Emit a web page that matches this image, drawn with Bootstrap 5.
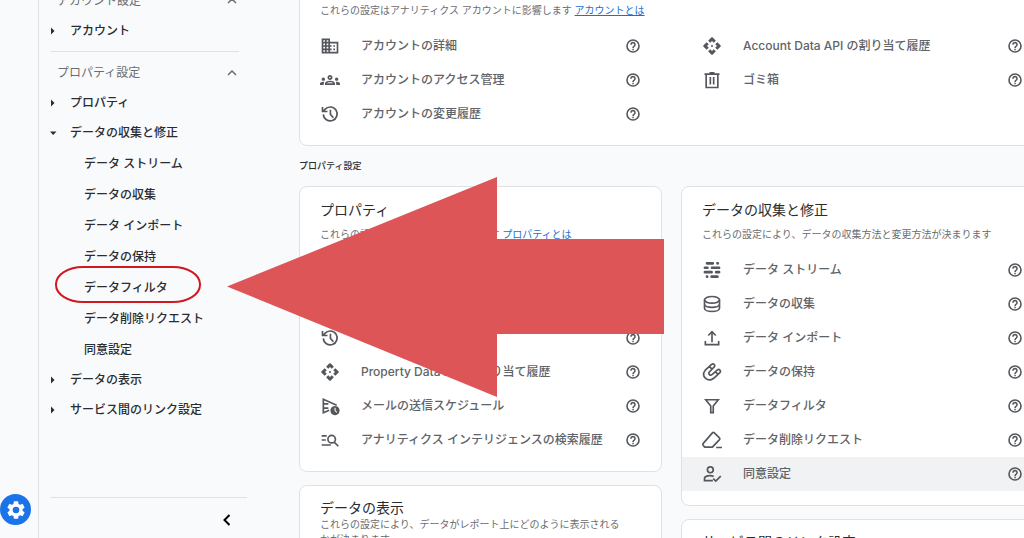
<!DOCTYPE html>
<html lang="ja">
<head>
<meta charset="utf-8">
<meta name="viewport" content="width=device-width, initial-scale=1">
<title>管理 - アナリティクス</title>
<link href="https://cdn.jsdelivr.net/npm/bootstrap@5.3.0/dist/css/bootstrap.min.css" rel="stylesheet">
<style>
:root { --ink:#2a2c2f; --muted-ink:#606367; --line:#dfe1e4; --page:#f9fafc; }
body { font-family:Inter,"Noto Sans CJK JP",sans-serif; font-size:12px; line-height:16px; color:var(--ink); background:var(--page); }
a { color:inherit; text-decoration:none; }
svg { display:block; fill:currentColor; flex-shrink:0; }
.line-icon { fill:none; stroke:currentColor; stroke-width:2; }
.plain-btn { border:0; padding:0; background:none; color:inherit; }

.rail { width:39px; border-right:1px solid var(--line); padding-bottom:13px; }
.gear-btn { width:31px; height:31px; background:#1a73e8; color:#fff; }

.side { width:260px; padding:0 52px 0 11px; }
.side-scroll { margin-top:-15px; font-weight:500; }
.side-head { height:31px; width:100%; padding:0 9px 0 7px; color:#6a6d71; font-weight:400; }
.side-rule { height:1px; background:var(--line); margin:5px 8px 5px 0; }
.tree-item { height:30px; width:100%; gap:12px; font-weight:500; }
.sub-item { height:31px; padding-left:34px; }
.ring { position:absolute; left:5px; top:-6px; width:146px; height:37px; border:2px solid #cf1820; border-radius:28px/18px; pointer-events:none; }
.side-foot { height:41px; border-top:1px solid var(--line); padding:4px 14px 0 0; }

.board { width:calc(100% + 20px); margin-top:-38px; }
.two-col { display:grid; grid-template-columns:1fr 1fr; gap:19px; }
.in-card { gap:21px; }
.stack { display:flex; flex-direction:column; gap:13px; }
.panel { background:#fff; border:1px solid var(--line); border-radius:8px; padding:14px 0; }
.panel h2 { font-size:14px; line-height:18px; font-weight:400; margin:0 20px 7px; }
.panel p { font-size:10px; line-height:16px; color:#6a6d71; margin:0 20px 11px; }
.panel.tight { padding-top:13px; }
.panel.tight h2 { margin-bottom:0; }
.panel.tight p { line-height:15px; }
.panel p a { color:#1a6fd0; text-decoration:underline; }
.section-label { height:40px; font-size:9px; font-weight:500; margin:0; }
.setting { height:34px; padding:0 20px; color:var(--muted-ink); font-weight:500; }
.setting a { gap:21px; }
.setting svg { color:#54575b; }
.setting.current { background:#f1f2f4; }
.arrow { position:absolute; left:227px; top:177px; pointer-events:none; }
</style>
</head>
<body class="overflow-hidden">
<svg width="0" height="0" class="position-absolute" aria-hidden="true">
  <symbol id="i-help" viewBox="0 0 24 24"><circle cx="12" cy="12" r="9" fill="none" stroke="currentColor" stroke-width="2.400"/><path d="M11 16h2.200v2.200H11zM12 5.800c-2.300 0-4.200 1.800-4.200 4.200h2.300c0-1.100.900-1.900 1.900-1.900s1.900.8 1.900 1.900c0 2-3 1.750-3 5h2.300c0-2.250 3-2.500 3-5 0-2.400-1.900-4.200-4.200-4.200z"/></symbol>
  <symbol id="i-domain" viewBox="0 0 24 24"><path d="M12 7V3H2v18h20V7H12zM6 19H4v-2h2v2zm0-4H4v-2h2v2zm0-4H4V9h2v2zm0-4H4V5h2v2zm4 12H8v-2h2v2zm0-4H8v-2h2v2zm0-4H8V9h2v2zm0-4H8V5h2v2zm10 12h-8v-2h2v-2h-2v-2h2v-2h-2V9h8v10zm-2-8h-2v2h2v-2zm0 4h-2v2h2v-2z"/></symbol>
  <symbol id="i-groups" viewBox="0 0 24 24"><path d="M4 13c1.100 0 2-.9 2-2s-.9-2-2-2-2 .9-2 2 .9 2 2 2zm1.130 1.100C4.760 14.040 4.390 14 4 14c-.99 0-1.930.210-2.780.580C.480 14.900 0 15.620 0 16.430V18h4.500v-1.610c0-.830.230-1.610.630-2.290zM20 13c1.100 0 2-.9 2-2s-.9-2-2-2-2 .9-2 2 .9 2 2 2zm4 3.430c0-.810-.480-1.530-1.220-1.850-.850-.370-1.790-.580-2.780-.580-.390 0-.760.040-1.130.100.400.680.630 1.460.630 2.290V18H24v-1.570zM16.240 13.650c-1.170-.520-2.610-.900-4.240-.900s-3.070.390-4.240.900C6.680 14.130 6 15.210 6 16.390V18h12v-1.610c0-1.180-.680-2.260-1.760-2.740zM8.070 16c.090-.230.130-.390.910-.690.970-.380 1.990-.560 3.020-.560s2.050.180 3.020.560c.770.300.810.460.910.690H8.070zM12 8c.550 0 1 .450 1 1s-.450 1-1 1-1-.450-1-1 .450-1 1-1m0-2c-1.660 0-3 1.340-3 3s1.340 3 3 3 3-1.340 3-3-1.340-3-3-3z"/></symbol>
  <symbol id="i-history" viewBox="0 0 24 24"><g class="line-icon"><path d="M4 12.500a8.300 8.300 0 1 0 2-6L3.500 9M3 3.500V9h6M12.500 7v5.500l3.500 4"/></g></symbol>
  <symbol id="i-api" viewBox="0 0 24 24"><path d="M13.500 12L12 13.500 10.500 12l1.500-1.500zM12 6l2.120 2.120 2.500-2.500L13 1.800q-1-.8-2 0L7.380 5.620l2.500 2.500zM6 12l2.120-2.120-2.500-2.500L1.800 11q-.8 1 0 2l3.820 3.620 2.500-2.500zM18 12l-2.120 2.120 2.500 2.500L22.200 13q.8-1 0-2l-3.820-3.620-2.500 2.500zM12 18l-2.120-2.120-2.500 2.500L11 22.200q1 .8 2 0l3.620-3.820-2.500-2.500z"/></symbol>
  <symbol id="i-trash" viewBox="0 0 24 24"><g class="line-icon"><path d="M3 5h18M5 5v16h14V5M9 3.500h6M10 8.500v9M14 8.500v9"/></g></symbol>
  <symbol id="i-send" viewBox="0 0 24 24"><g class="line-icon"><path d="M11 17l-7 3V4l16 7M4 9.500h6M4 14.500h6"/></g><path fill-rule="evenodd" d="M18 12a5.500 5.500 0 1 0 .01 0zM17.400 14h1.300v3.300l2 2-.9.9-2.400-2.400z"/></symbol>
  <symbol id="i-search" viewBox="0 0 24 24"><g class="line-icon"><path d="M2 7h6M2 12h5M2 18h11M17 14.500l5 5"/><circle cx="14" cy="11" r="4.500"/></g></symbol>
  <symbol id="i-stream" viewBox="0 0 24 24"><g fill="none" stroke="currentColor" stroke-width="3.200" stroke-linecap="round"><path d="M6 4h7M18.500 4h.5M3.500 9.300h3M12 9.300h8.500M3.500 14.600h8M17 14.600h3.500M6 20h.2M11.500 20h7"/></g></symbol>
  <symbol id="i-db" viewBox="0 0 24 24"><g class="line-icon"><ellipse cx="12" cy="7" rx="9" ry="4"/><path d="M3 7v10c0 2.300 4 4 9 4s9-1.700 9-4V7M3 12c0 2.300 4 4 9 4s9-1.700 9-4"/></g></symbol>
  <symbol id="i-upload" viewBox="0 0 24 24"><g class="line-icon"><path d="M12 17V5M7.500 9L12 4.500 16.500 9M4 15.500V20h16v-4.500"/></g></symbol>
  <symbol id="i-clip" viewBox="0 0 24 24"><g class="line-icon"><path d="M11.500 2.800a2.200 2.200 0 0 1 3.200 3L8.800 12c-2 2.100 1.200 5 3.200 3l6.500-5.500a2.200 2.200 0 0 1 3 3.200L14 19.500C7 25-2 17 4 9.800zM9 5.500l3 3M16 11.500l3 3"/></g></symbol>
  <symbol id="i-filter" viewBox="0 0 24 24"><g class="line-icon"><path d="M4.500 4.500h15L13.500 12v8h-3v-8z"/></g></symbol>
  <symbol id="i-eraser" viewBox="0 0 24 24"><g class="line-icon" stroke-linejoin="round"><path d="M14.500 3.200L21 9.500q.8 1 0 2L12.500 20.500H3L1.200 18q-.5-1 .3-2L12.500 3.400q1-1 2-.2zM17 21h7"/></g></symbol>
  <symbol id="i-consent" viewBox="0 0 24 24"><g class="line-icon"><circle cx="10" cy="7" r="3.500"/><path d="M13 20H3v-2.500C3 14 10 13 14 15M13.500 17.500l3 3 6-6"/></g></symbol>
  <symbol id="i-up" viewBox="0 0 12 12"><path d="M2 8l4-4 4 4" fill="none" stroke="currentColor" stroke-width="1.500"/></symbol>
  <symbol id="i-right" viewBox="0 0 8 8"><path d="M1 .5L4.500 4 1 7.500z"/></symbol>
  <symbol id="i-down" viewBox="0 0 8 8"><path d="M0 2.500h6.500L3.200 6z"/></symbol>
</svg>

<div class="d-flex vh-100 overflow-hidden position-relative">
  <div class="rail d-flex align-items-end flex-shrink-0">
    <button class="gear-btn plain-btn rounded-circle d-flex align-items-center justify-content-center flex-shrink-0" aria-label="管理">
      <svg width="22" height="22" viewBox="0 0 24 24"><path d="M19.140 12.940c.040-.300.060-.610.060-.940s-.020-.640-.070-.940l2.030-1.580a.49.49 0 0 0 .120-.610l-1.920-3.320a.49.49 0 0 0-.590-.220l-2.390.960a7 7 0 0 0-1.620-.940l-.360-2.540a.48.48 0 0 0-.480-.410h-3.840a.48.48 0 0 0-.470.410l-.360 2.540a7 7 0 0 0-1.620.940l-2.390-.960a.48.48 0 0 0-.590.220L2.740 8.870a.48.48 0 0 0 .120.610l2.030 1.580a6 6 0 0 0 0 1.880l-2.030 1.580a.49.49 0 0 0-.120.610l1.920 3.320c.120.220.370.290.590.220l2.390-.960q.750.590 1.620.940l.360 2.540c.050.240.240.410.480.410h3.840c.240 0 .440-.170.470-.410l.360-2.540a7 7 0 0 0 1.620-.940l2.390.960c.220.080.470 0 .590-.220l1.920-3.320a.48.48 0 0 0-.120-.610zM12 15.600a3.600 3.600 0 1 1 0-7.200 3.600 3.600 0 0 1 0 7.200z"/></svg>
    </button>
  </div>

  <nav class="side d-flex flex-column flex-shrink-0" aria-label="設定">
    <div class="side-scroll flex-grow-1">
      <button class="side-head plain-btn d-flex align-items-center justify-content-between">アカウント設定<svg width="12" height="12"><use href="#i-up"/></svg></button>
      <button class="tree-item plain-btn d-flex align-items-center"><svg width="8" height="8"><use href="#i-right"/></svg>アカウント</button>
      <div class="side-rule"></div>
      <button class="side-head plain-btn d-flex align-items-center justify-content-between">プロパティ設定<svg width="12" height="12"><use href="#i-up"/></svg></button>
      <button class="tree-item plain-btn d-flex align-items-center"><svg width="8" height="8"><use href="#i-right"/></svg>プロパティ</button>
      <button class="tree-item plain-btn d-flex align-items-center"><svg width="8" height="8"><use href="#i-down"/></svg>データの収集と修正</button>
      <ul class="list-unstyled mb-0">
        <li class="sub-item d-flex align-items-center"><a href="#">データ ストリーム</a></li>
        <li class="sub-item d-flex align-items-center"><a href="#">データの収集</a></li>
        <li class="sub-item d-flex align-items-center"><a href="#">データ インポート</a></li>
        <li class="sub-item d-flex align-items-center"><a href="#">データの保持</a></li>
        <li class="sub-item d-flex align-items-center position-relative"><a href="#">データフィルタ</a><span class="ring"></span></li>
        <li class="sub-item d-flex align-items-center"><a href="#">データ削除リクエスト</a></li>
        <li class="sub-item d-flex align-items-center"><a href="#">同意設定</a></li>
      </ul>
      <button class="tree-item plain-btn d-flex align-items-center"><svg width="8" height="8"><use href="#i-right"/></svg>データの表示</button>
      <button class="tree-item plain-btn d-flex align-items-center"><svg width="8" height="8"><use href="#i-right"/></svg>サービス間のリンク設定</button>
    </div>
    <div class="side-foot d-flex align-items-center justify-content-end">
      <button class="plain-btn" aria-label="閉じる"><svg width="12" height="12" viewBox="0 0 12 12"><path d="M8.500 1L3.500 6l5 5" fill="none" stroke="#000" stroke-width="2"/></svg></button>
    </div>
  </nav>

  <main class="flex-grow-1">
    <div class="board">
      <section class="panel">
        <h2>アカウント</h2>
        <p>これらの設定はアナリティクス アカウントに影響します <a href="#">アカウントとは</a></p>
        <div class="two-col in-card">
          <ul class="list-unstyled mb-0">
            <li class="setting d-flex align-items-center justify-content-between"><a href="#" class="d-flex align-items-center"><svg width="20" height="20"><use href="#i-domain"/></svg>アカウントの詳細</a><button class="plain-btn" aria-label="ヘルプ"><svg width="16" height="16"><use href="#i-help"/></svg></button></li>
            <li class="setting d-flex align-items-center justify-content-between"><a href="#" class="d-flex align-items-center"><svg width="20" height="20"><use href="#i-groups"/></svg>アカウントのアクセス管理</a><button class="plain-btn" aria-label="ヘルプ"><svg width="16" height="16"><use href="#i-help"/></svg></button></li>
            <li class="setting d-flex align-items-center justify-content-between"><a href="#" class="d-flex align-items-center"><svg width="20" height="20"><use href="#i-history"/></svg>アカウントの変更履歴</a><button class="plain-btn" aria-label="ヘルプ"><svg width="16" height="16"><use href="#i-help"/></svg></button></li>
          </ul>
          <ul class="list-unstyled mb-0">
            <li class="setting d-flex align-items-center justify-content-between"><a href="#" class="d-flex align-items-center"><svg width="20" height="20"><use href="#i-api"/></svg>Account Data API の割り当て履歴</a><button class="plain-btn" aria-label="ヘルプ"><svg width="16" height="16"><use href="#i-help"/></svg></button></li>
            <li class="setting d-flex align-items-center justify-content-between"><a href="#" class="d-flex align-items-center"><svg width="20" height="20"><use href="#i-trash"/></svg>ゴミ箱</a><button class="plain-btn" aria-label="ヘルプ"><svg width="16" height="16"><use href="#i-help"/></svg></button></li>
          </ul>
        </div>
      </section>

      <h1 class="section-label d-flex align-items-center">プロパティ設定</h1>

      <div class="two-col">
        <div class="stack">
          <section class="panel">
            <h2>プロパティ</h2>
            <p>これらの設定はプロパティに影響します <a href="#">プロパティとは</a></p>
            <ul class="list-unstyled mb-0">
              <li class="setting d-flex align-items-center justify-content-between"><a href="#" class="d-flex align-items-center"><svg width="20" height="20"><use href="#i-domain"/></svg>プロパティの詳細</a><button class="plain-btn" aria-label="ヘルプ"><svg width="16" height="16"><use href="#i-help"/></svg></button></li>
              <li class="setting d-flex align-items-center justify-content-between"><a href="#" class="d-flex align-items-center"><svg width="20" height="20"><use href="#i-groups"/></svg>プロパティのアクセス管理</a><button class="plain-btn" aria-label="ヘルプ"><svg width="16" height="16"><use href="#i-help"/></svg></button></li>
              <li class="setting d-flex align-items-center justify-content-between"><a href="#" class="d-flex align-items-center"><svg width="20" height="20"><use href="#i-history"/></svg>プロパティの変更履歴</a><button class="plain-btn" aria-label="ヘルプ"><svg width="16" height="16"><use href="#i-help"/></svg></button></li>
              <li class="setting d-flex align-items-center justify-content-between"><a href="#" class="d-flex align-items-center"><svg width="20" height="20"><use href="#i-api"/></svg>Property Data API の割り当て履歴</a><button class="plain-btn" aria-label="ヘルプ"><svg width="16" height="16"><use href="#i-help"/></svg></button></li>
              <li class="setting d-flex align-items-center justify-content-between"><a href="#" class="d-flex align-items-center"><svg width="20" height="20"><use href="#i-send"/></svg>メールの送信スケジュール</a><button class="plain-btn" aria-label="ヘルプ"><svg width="16" height="16"><use href="#i-help"/></svg></button></li>
              <li class="setting d-flex align-items-center justify-content-between"><a href="#" class="d-flex align-items-center"><svg width="20" height="20"><use href="#i-search"/></svg>アナリティクス インテリジェンスの検索履歴</a><button class="plain-btn" aria-label="ヘルプ"><svg width="16" height="16"><use href="#i-help"/></svg></button></li>
            </ul>
          </section>
          <section class="panel tight">
            <h2>データの表示</h2>
            <p>これらの設定により、データがレポート上にどのように表示される<br>かが決まります</p>
          </section>
        </div>
        <div class="stack">
          <section class="panel">
            <h2>データの収集と修正</h2>
            <p>これらの設定により、データの収集方法と変更方法が決まります</p>
            <ul class="list-unstyled mb-0">
              <li class="setting d-flex align-items-center justify-content-between"><a href="#" class="d-flex align-items-center"><svg width="20" height="20"><use href="#i-stream"/></svg>データ ストリーム</a><button class="plain-btn" aria-label="ヘルプ"><svg width="16" height="16"><use href="#i-help"/></svg></button></li>
              <li class="setting d-flex align-items-center justify-content-between"><a href="#" class="d-flex align-items-center"><svg width="20" height="20"><use href="#i-db"/></svg>データの収集</a><button class="plain-btn" aria-label="ヘルプ"><svg width="16" height="16"><use href="#i-help"/></svg></button></li>
              <li class="setting d-flex align-items-center justify-content-between"><a href="#" class="d-flex align-items-center"><svg width="20" height="20"><use href="#i-upload"/></svg>データ インポート</a><button class="plain-btn" aria-label="ヘルプ"><svg width="16" height="16"><use href="#i-help"/></svg></button></li>
              <li class="setting d-flex align-items-center justify-content-between"><a href="#" class="d-flex align-items-center"><svg width="20" height="20"><use href="#i-clip"/></svg>データの保持</a><button class="plain-btn" aria-label="ヘルプ"><svg width="16" height="16"><use href="#i-help"/></svg></button></li>
              <li class="setting d-flex align-items-center justify-content-between"><a href="#" class="d-flex align-items-center"><svg width="20" height="20"><use href="#i-filter"/></svg>データフィルタ</a><button class="plain-btn" aria-label="ヘルプ"><svg width="16" height="16"><use href="#i-help"/></svg></button></li>
              <li class="setting d-flex align-items-center justify-content-between"><a href="#" class="d-flex align-items-center"><svg width="20" height="20"><use href="#i-eraser"/></svg>データ削除リクエスト</a><button class="plain-btn" aria-label="ヘルプ"><svg width="16" height="16"><use href="#i-help"/></svg></button></li>
              <li class="setting current d-flex align-items-center justify-content-between"><a href="#" class="d-flex align-items-center"><svg width="20" height="20"><use href="#i-consent"/></svg>同意設定</a><button class="plain-btn" aria-label="ヘルプ"><svg width="16" height="16"><use href="#i-help"/></svg></button></li>
            </ul>
          </section>
          <section class="panel tight">
            <h2>サービス間のリンク設定</h2>
            <p>これらの設定により、リンクするサービスが決まります</p>
          </section>
        </div>
      </div>
    </div>
  </main>

  <svg class="arrow" width="437" height="220" viewBox="0 0 437 220" aria-hidden="true"><path fill="#dd5557" d="M0 109.500L270 0v62h167v95H270v63z"/></svg>
</div>
<script src="https://cdn.jsdelivr.net/npm/bootstrap@5.3.0/dist/js/bootstrap.bundle.min.js"></script>
</body>
</html>
